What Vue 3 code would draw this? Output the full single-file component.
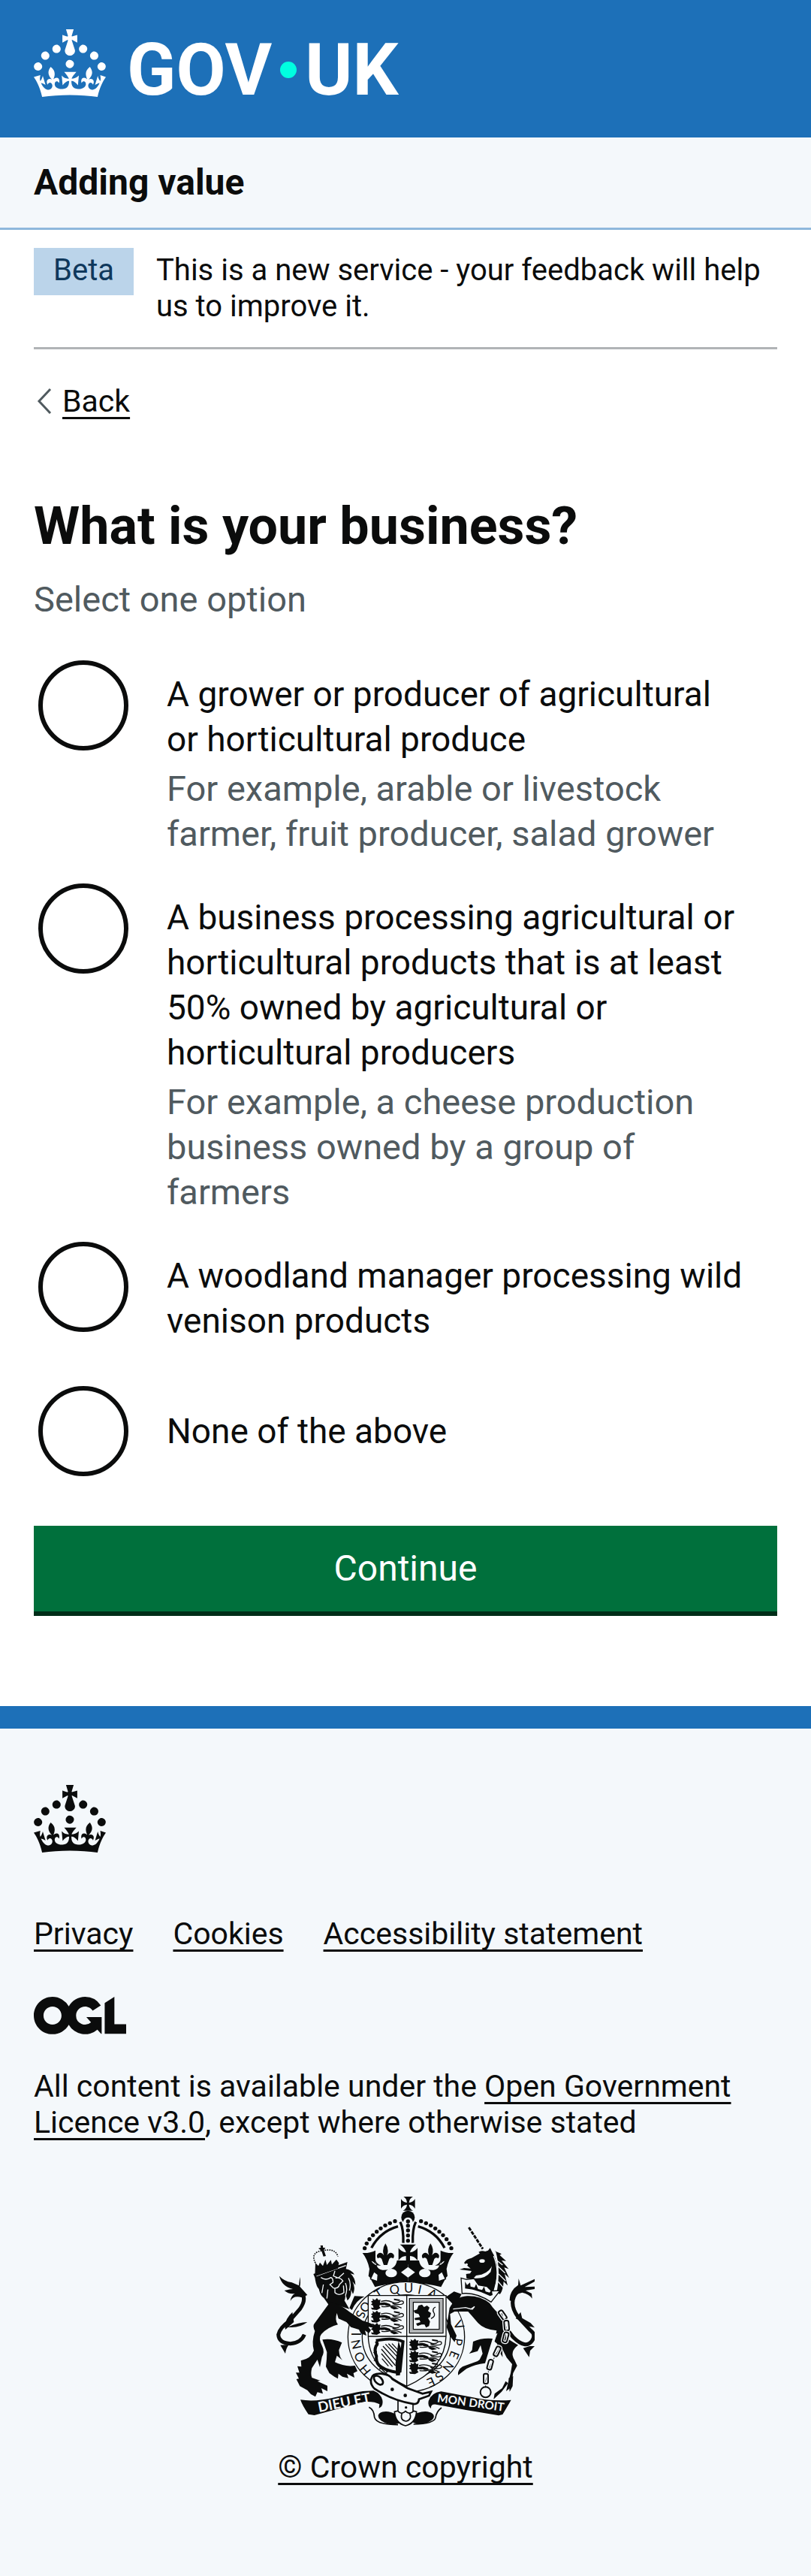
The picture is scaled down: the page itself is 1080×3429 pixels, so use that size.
<script setup>
import { ref } from 'vue'

const choice = ref('')

const options = [
  {
    value: 'grower',
    label: 'A grower or producer of agricultural or horticultural produce',
    hint: 'For example, arable or livestock farmer, fruit producer, salad grower'
  },
  {
    value: 'processor',
    label: 'A business processing agricultural or horticultural products that is at least 50% owned by agricultural or horticultural producers',
    hint: 'For example, a cheese production business owned by a group of farmers'
  },
  { value: 'woodland', label: 'A woodland manager processing wild venison products' },
  { value: 'none', label: 'None of the above' }
]

const footerLinks = ['Privacy', 'Cookies', 'Accessibility statement']

const crownPath =
  'M22.6 10.4c-1 .4-2-.1-2.4-1-.4-.9.1-2 1-2.4.9-.4 2 .1 2.4 1s-.1 2-1 2.4m-5.9 6.7c-.9.4-2-.1-2.4-1-.4-.9.1-2 1-2.4.9-.4 2 .1 2.4 1s-.1 2-1 2.4m10.8-3.7c-1 .4-2-.1-2.4-1-.4-.9.1-2 1-2.4.9-.4 2 .1 2.4 1s0 2-1 2.4m3.3 4.8c-1 .4-2-.1-2.4-1-.4-.9.1-2 1-2.4.9-.4 2 .1 2.4 1s-.1 2-1 2.4M17 4.7l2.3 1.2V2.5l-2.3.7-.2-.2.9-3h-3.4l.9 3-.2.2c-.1.1-2.3-.7-2.3-.7v3.4L15 4.7c.1.1.1.2.2.2l-1.3 4c-.1.2-.1.4-.1.6 0 1.1.8 2 1.9 2.2h.7c1-.2 1.9-1.1 1.9-2.1 0-.2 0-.4-.1-.6l-1.3-4c-.1-.2 0-.2.1-.3m-7.6 5.7c.9.4 2-.1 2.4-1 .4-.9-.1-2-1-2.4-.9-.4-2 .1-2.4 1s0 2 1 2.4m-5 3c.9.4 2-.1 2.4-1 .4-.9-.1-2-1-2.4-.9-.4-2 .1-2.4 1s.1 2 1 2.4m-3.2 4.8c.9.4 2-.1 2.4-1 .4-.9-.1-2-1-2.4-.9-.4-2 .1-2.4 1s0 2 1 2.4m14.8 11c4.4 0 8.6.3 12.3.8 1.1-4.5 2.4-7 3.7-8.8l-2.5-.9c.2 1.3.3 1.9 0 2.7-.4-.4-.8-1.1-1.1-2.3l-1.2 4c.7-.5 1.3-.8 2-.9-1.1 2.5-2.6 3.1-3.5 3-1.1-.2-1.7-1.2-1.5-2.1.3-1.2 1.5-1.5 2.1-.1 1.1-2.3-.8-3-2-2.3 1.9-1.9 2.1-3.5.6-5.6-2.1 1.6-2.1 3.2-1.2 5.5-1.2-1.4-3.2-.6-2.5 1.6.9-1.4 2.1-.5 1.9.8-.2 1.1-1.7 2.1-3.5 1.9-2.7-.2-2.9-2.1-2.9-3.6.7-.1 1.9.5 2.9 1.9l.4-4.3c-1.1 1.1-2.1 1.4-3.2 1.4.4-1.2 2.1-3 2.1-3h-5.4s1.7 1.9 2.1 3c-1.1 0-2.1-.2-3.2-1.4l.4 4.3c1-1.4 2.2-2 2.9-1.9-.1 1.5-.2 3.4-2.9 3.6-1.9.2-3.4-.8-3.5-1.9-.2-1.3 1-2.2 1.9-.8.7-2.3-1.2-3-2.5-1.6.9-2.2.9-3.9-1.2-5.5-1.5 2-1.3 3.7.6 5.6-1.2-.7-3.1 0-2 2.3.6-1.4 1.8-1.1 2.1.1.2.9-.3 1.9-1.5 2.1-.9.2-2.4-.5-3.5-3 .6 0 1.2.3 2 .9l-1.2-4c-.3 1.1-.7 1.9-1.1 2.3-.3-.8-.2-1.4 0-2.7l-2.9.9C1.3 23 2.6 25.5 3.7 30c3.7-.5 7.9-.8 12.3-.8'

// Royal coat of arms: pearls on the left arch; the right arch mirrors them about x = 610
const archPearls = [
  [558, 173], [538, 181], [519, 190], [501, 202], [485, 215],
  [470, 229], [456, 245], [445, 262], [437, 281]
]
const stemPearls = [174, 191, 210, 230, 251]

// Letters of the garter motto: character, x, y, angle
const motto = [
  ['H', 438, 768, 50], ['O', 416, 716, 65], ['N', 402, 665, 78], ['I', 402, 624, 90],
  ['S', 420, 545, 110], ['O', 438, 515, 125],
  ['T', 493, 463, -32], ['Q', 556, 446, -10], ['U', 612, 441, 0], ['I', 657, 447, 12], ['A', 708, 464, 28],
  ['V', 812, 588, 62], ['P', 808, 655, 98], ['E', 794, 707, 112],
  ['N', 770, 754, 128], ['S', 735, 792, 142], ['E', 702, 816, 156]
]

// Top-left corner of each small walking lion on the shield
const shieldLions = [
  [462, 482], [462, 532], [462, 581],
  [614, 644], [614, 691], [614, 738]
]

const chainLinks = [
  [988, 548, -35], [1004, 590, -5], [1000, 637, 15], [966, 693, 25], [938, 746, 15], [921, 802, 0]
]
</script>

<template>
  <div class="page">
    <header>
      <div class="masthead">
        <a class="brand" href="#" aria-label="GOV.UK">
          <svg class="crown" viewBox="0 0 32 30" aria-hidden="true"><path :d="crownPath" /></svg>
          <span class="wordmark">GOV<i class="dot"></i>UK</span>
        </a>
      </div>
      <div class="service"><a href="#">Adding value</a></div>
    </header>

    <div class="container">
      <div class="phase">
        <strong class="tag">Beta</strong>
        <span>This is a new service - your feedback will help us to improve it.</span>
      </div>

      <a class="back" href="#">
        <svg viewBox="0 0 20 34" aria-hidden="true"><path d="M18 1 3 17l15 16" /></svg>
        <span class="link">Back</span>
      </a>

      <main>
        <form @submit.prevent>
          <fieldset aria-describedby="business-hint">
            <legend><h1>What is your business?</h1></legend>
            <div id="business-hint" class="hint">Select one option</div>
            <div class="radios">
              <div v-for="o in options" :key="o.value" class="option">
                <input :id="o.value" v-model="choice" type="radio" name="business" :value="o.value" />
                <div class="option-text">
                  <label :for="o.value">{{ o.label }}</label>
                  <div v-if="o.hint" class="option-hint">{{ o.hint }}</div>
                </div>
              </div>
            </div>
          </fieldset>
          <button type="submit">Continue</button>
        </form>
      </main>
    </div>

    <footer>
      <svg class="crown" viewBox="0 0 32 30" aria-hidden="true"><path :d="crownPath" /></svg>
      <ul class="footer-links">
        <li v-for="l in footerLinks" :key="l"><a class="link" href="#">{{ l }}</a></li>
      </ul>
      <svg class="ogl" viewBox="0 0 483 196" role="img" aria-label="Open Government Licence">
        <path d="M421.5 142.8V.1l-50.7 32.3v161.1h112.4v-50.7zm-122.3-9.6A47.12 47.12 0 0 1 221 97.8c0-26 21.1-47.1 47.1-47.1 16.7 0 31.4 8.7 39.7 21.8l42.7-27.2A97.63 97.63 0 0 0 268.1 0c-36.5 0-68.3 20.1-85.1 49.7A98 98 0 0 0 97.8 0C43.9 0 0 43.9 0 97.8s43.9 97.8 97.8 97.8c36.5 0 68.3-20.1 85.1-49.7a97.76 97.76 0 0 0 149.6 25.4l19.4 22.2h3v-87.8h-80l24.3 27.5zM97.8 145c-26 0-47.1-21.1-47.1-47.1s21.1-47.1 47.1-47.1 47.1 21.1 47.1 47.1S123.8 145 97.8 145" />
      </svg>
      <p class="licence">
        All content is available under the <a class="link" href="#">Open Government Licence v3.0</a>, except where otherwise stated
      </p>

      <a class="copyright" href="#">
        <svg class="arms" viewBox="84 75 1032 918" aria-hidden="true">
          <defs>
            <g id="passant">
              <path d="M6 0l10 6 8-8 6 8 8-2-2 12 6 6-8 6-2 8-12 4-10-4-2-8-8-4 6-6-6-6 8-4zM36 18q20-6 34 2 10 2 8 8-12 4-24-2-14 2-18-2zM0 36l18 2 16-6 4 6-14 8-20-2zM92 0l24 4-2 6-22-4zM76 32q18-4 28 4l8 4-20 4-12-6z" />
              <path class="line" d="M40 12q24-8 44 2t34-4q12-2 12 6t-20 8q-18 0-24-6M42 32q22 2 34-2 22-6 46 8" />
            </g>
            <path id="fleur" d="M520 262q-16 24-6 48-10-16-23-8-10 8-2 20 10-8 16 2l8 24h14l8-24q6-10 16-2 8-12-2-20-13-8-23 8 10-24-6-48z" />
            <path id="cross-patee" d="M-16-28H20Q5-20 4-4 20-5 28-19V20Q20 5 4 4 5 20 20 28H-20Q-5 20-4 4-20 5-28 20V-19Q-20-5-4-4-5-20-18-28z" />
            <g id="half-crown">
              <circle v-for="p in archPearls" :key="p[0]" :cx="p[0]" :cy="p[1]" r="8" />
              <path class="arch" d="M570 194q-72 20-106 86" />
              <path d="M428 300q28 2 52-10v54q-10-12-16-12 10 20 38 18-20-8-22-24-1 14 4 22 6 18 24 20 52 2 58-38h44v90q-74 0-132 16l-20-38-6-6 4-28q-8-40-28-64z" />
              <use href="#fleur" />
              <ellipse class="bg" cx="543" cy="380" rx="23" ry="17" />
              <path class="bg edge" d="m474 374-14 30 28 10 2-28z" />
            </g>
          </defs>

          <!-- main crown -->
          <use href="#half-crown" />
          <use href="#half-crown" transform="matrix(-1 0 0 1 1220 0)" />
          <use href="#cross-patee" x="610" y="103" />
          <circle cx="610" cy="158" r="27" />
          <path class="bg" d="M589 182q4-24 21-24t21 24v80h-42z" />
          <path class="arch" d="M579 176q14 30 12 84M641 176q-14 30-12 84" />
          <circle v-for="y in stemPearls" :key="y" cx="610" :cy="y" r="8" />
          <path d="M578 266h64q-20 14-24 32 22-4 30-18v50q-12-18-30-18v34h-16v-34q-18 0-30 18v-50q8 14 30 18-4-18-24-32z" />
          <path class="bg" d="m610 356 28 21-28 21-28-21z" />

          <!-- lion's far arm and unicorn's far shoulder -->
          <path d="M376 520l20-48 40 2q-34 16-50 54zM764 474l30-20 30 10-20 40-34 8z" />

          <!-- garter -->
          <ellipse class="bg ring" cx="603" cy="635" rx="233" ry="220" />
          <ellipse class="ring" cx="603" cy="635" rx="176" ry="168" />
          <text v-for="(m, i) in motto" :key="i" class="motto" :transform="`translate(${m[1]} ${m[2]}) rotate(${m[3]})`" dy="17">{{ m[0] }}</text>

          <!-- shield -->
          <path class="bg ring" d="M451 470h311v162q-4 132-157 200-150-68-154-200z" />
          <path class="line" d="M605 470v362M451 633h311" />
          <use v-for="(l, i) in shieldLions" :key="i" href="#passant" :x="l[0]" :y="l[1]" />
          <path class="grey" d="M624 490h118v122H624z" />
          <path class="line" d="M616 482h134v138H616zM631 497h104v108H631z" />
          <path d="M652 510l14-4 8 10 12-6 10 8-6 14 12 8-4 16-8 4 8 14-4 18-12 6-6-12-12 0-16 6-6-10 18-6-4-8-18 0-2-8 22-4-6-12-14-4-6-10 14-4z" />
          <path class="line" d="M702 562q22-10 10-26-6-14 8-20" />
          <!-- harp -->
          <path class="harp" d="M482 652q10 10 0 20-8 20 2 40-4 30 20 44 24 16 60 20l14-4 12-118q-40-18-108-4" />
          <path class="strings" d="m510 672 62 68M520 664l56 60M532 662l46 48M546 662l34 36M504 684l56 66M504 702l44 52M506 722l26 30" />
          <path d="M486 690l-16 8 16 8zM486 722l-14 8 18 8zM500 752l-6 14 16-4zM524 766l-2 14 14-8zM560 740l12-88 14 40-8 96-16 2z" />

          <!-- lion -->
          <path d="M232 384l136-48-6 28q20 2 34 22l-16-4q20 18 20 46l-12-14q14 24 2 50l-8-18q4 28-14 44l-8-26q0 18-4 26l20 34-56-18-6 18-12-4-28-40q-14-8-20-36-10-10-14-34 0-10-8-26z" />
          <path class="carve" d="M244 392l118-42M262 398q20 14 40 0 10 4 8 20l-12 8 14 14q20 4 24-14l14-14q-10-16-30-12M318 372l-6 20 20 8 22-20M318 442v16q16 16 36 0l-2-28M272 426l-6 34M290 446l-4 36M372 400q12 20 4 50M360 420q10 24 0 50" />
          <path d="M300 494q44 14 78 42l50 34q24 6 44 16l-8 12-14-4 12 14-8 12-16-10 6 20-22-8-8-16-32-10-18-20-32-14-6-22q-10 28 4 46-40 10-66 38-14 16 4 50 10 20-2 42l-8 40-10-30-22 34q-6 24 0 38l34 12-12 2 40 18 0 22-24-12 6 22-22-6-8 18-18-10-14-16-30-16-14-28 10-2-12-24 14 0-8-26 16 2-2-24q40-8 52-40-10-36 4-78-10-20-2-30z" />
          <path d="M268 646q40-6 78 12l-12 30q2 30 14 40l-22-18-8 26q40 20 80 14l10 22-16 8 4 18-30-16 6 18-24-6-16-12-2 20-14-8-20-14-14-26q4-30 4-58z" />
          <path class="tail" d="M196 626q-14 34-56 36-46-2-48-36 6-28 46-56l40-46q32-44 0-74" />
          <path d="M96 392q18 20 50 26l28 12 4-34q4 24 0 38l30 34-22 10q-34-10-46 14 2-20 18-30-24 4-42-12 24-6 34-6-44-10-54-52zM148 536l6 40-34 30q-8-36 28-70zM130 596q44-20 78-20-34 26-78 20zM100 668l20 34q2-20 14-36z" />
          <!-- lion's crown -->
          <path class="pearls" d="M240 340q-16-32 8-44l18-6 26-2q30 0 38 26" />
          <path d="M240 340l12 12 6-14 12 14 10-26 6 22 16-20 4 18 18-20 10 14-4 22-92 32zM252 282l10-4-2-8 10 0 0 8 10 2-6 8 8 24-10 2-8-24z" />

          <!-- unicorn -->
          <path class="horn" d="M853 198l56 86" />
          <path d="M892 296q20-10 38 4l-6 12q-20 2-32-16z" />
          <path d="M834 340q8-16 30-20l36-20 30-10 8-10 16 32-4 30q-12 34-46 44l-22 4-14 14-24-2-2-18 16-2 6-10-18-2-30-4 18-6 26 2z" />
          <path d="M940 290q30 34 26 90-4 46-20 90l-38-14-30-22-20-24 8-10q50 8 74-24 12-40-2-80z" />
          <path d="M956 292l28 12-8 4 26 24-18-2 28 34-18-6 20 42-18-16 12 46-16-16q0 30-14 50l-14-4q18-90-4-168z" />
          <path class="carve" d="M952 312q26 60 4 140M960 326l28 22M968 352l30 28M972 384l28 28M970 414l22 26" />
          <ellipse class="bg" cx="906" cy="332" rx="11" ry="7" />
          <circle class="bg" cx="844" cy="346" r="5" />
          <path class="bg line" d="M822 400l22 6 30-4 18 26 34 6 18 18 34-2-36 46q-60-40-116-34z" />
          <path d="M838 414l8 14 12-10 2 16 16 4 6-14 8 20 16 4 8-14 6 20 16 4 8-12 4 22-10 4q-50-26-100-30z" />
          <path d="M776 520q24-46 70-48 50-2 90 28 20 30 46 50l14 42-4 40 38 24 20 12q-36 26-14 60l10 22-16 30-6 38-4 20-18 14 6-26 12-46 6-36-22-26-18-36 2 34-14-24-8-30-10-8 8-44q-50-4-74-30l-26-30-14-16-54 0-18 10 4 40 22 46-8 26-18-24-14-36z" />
          <path class="carve" d="M790 524l50-6 22 6 14-10-10 12M950 630l14-6-10 26" />
          <path d="M870 654q34-16 78-12l-14 46-16 52q-40 4-74 22l-34 26q-4-20 18-34l60-22 8-6 12-24-8-34-12 24-34 10 12-14z" />
          <path d="M1012 800l18-8-2 40-12 22zM1010 820l-26 34-32 30 4-22 30-22 14-28z" />
          <path class="tail" d="M1010 610l20 26q50 50 76 14 16-24-6-40l-50-54q-44-60 0-106" />
          <path d="M1016 490q0-40 34-62l2-26 8 28 56-26v10l-40 22 40-2v10l-36 6 24 12 2 20q-12-18-40-24-32 6-36 36zM1040 562l20-26 6 24 34 20 16 18-30-6-20-20zM1070 680l24 36 4-26 18-18-20 0z" />

          <!-- chain -->
          <path class="chain-line" d="M792 494q-4-30 26-28M984 540l18 56-2 44-36 60-28 56-16 56v26" />
          <g v-for="(c, i) in chainLinks" :key="i" :transform="`translate(${c[0]} ${c[1]}) rotate(${c[2]})`">
            <rect class="chain-gap" x="-9" y="-20" width="18" height="40" rx="7" />
            <rect class="chain" x="-9" y="-20" width="18" height="40" rx="7" />
          </g>
          <circle class="chain" cx="920" cy="856" r="21" />

          <!-- ribbon -->
          <path d="M180 886q60 10 140-10t110-24l42-2q30 12 36 38 4 24-14 32l2-16q-20-12-60-10l-200 54-24-4q-24-34-32-58z" />
          <path d="M1022 887q-80 6-160-12l-120-22q-40 6-50 38-4 20 10 30-2-18 20-16l120 22 130 22 16-4z" />
          <path class="thin" d="M454 916q20 10 22 40 8 30 94 30M744 918q-20 14-24 40-6 24-88 26" />
          <ellipse cx="536" cy="959" rx="46" ry="24" transform="rotate(14 536 959)" />
          <ellipse cx="668" cy="958" rx="46" ry="24" transform="rotate(-10 668 958)" />
          <text class="scroll wide" transform="translate(254 936) rotate(-11)">DIEU ET</text>
          <text class="scroll" transform="translate(725 895) rotate(8)">MON DROIT</text>

          <!-- buckle and strap -->
          <path class="bg thin" d="M570 880v50l-14 4q4 46 44 56 40-10 44-56l-14-4v-40z" />
          <path class="thin" d="M586 940q-10 28 16 32 26-6 14-34M570 932q14 16 30 0 16 16 32 0" />
          <path class="bg belt" d="M464 800q4-20 40-18 34 4 44 22l60 36 60 22 34-8-8 16-40 14q-2 24-28 18-80-14-150-60-20-20-12-42z" />
          <ellipse class="belt" cx="492" cy="808" rx="22" ry="13" transform="rotate(45 492 808)" />
          <circle cx="547" cy="845" r="7" /><circle cx="599" cy="869" r="7" /><circle cx="602" cy="917" r="5" />
        </svg>
        <span class="link">© Crown copyright</span>
      </a>
    </footer>
  </div>
</template>

<style>
body {
  margin: 0;
  background: #f4f8fb;
}
</style>

<style scoped>
.page {
  background: #fff;
  color: #0b0c0c;
  font: 41px/48px Roboto, "Liberation Sans", sans-serif;
}
a {
  color: inherit;
  text-decoration: none;
}
.link {
  text-decoration: underline 3px;
  text-underline-offset: 7px;
  text-decoration-skip-ink: none;
}

.masthead {
  padding: 39px 45px 36px;
  background: #1d70b8;
}
.brand {
  display: flex;
  align-items: flex-start;
  gap: 28px;
  color: #fff;
}
.crown {
  display: block;
  width: 96px;
  height: 90px;
  fill: currentColor;
}
.wordmark {
  display: flex;
  align-items: center;
  font-size: 96px;
  font-weight: 700;
  line-height: 108px;
}
.dot {
  width: 22px;
  height: 22px;
  margin: 0 11px;
  border-radius: 50%;
  background: #00ffe0;
}
.service {
  padding: 30px 45px;
  border-bottom: 3px solid #8eb8dc;
  background: #f4f8fb;
  font-size: 48px;
  font-weight: 700;
  line-height: 60px;
}

.container {
  padding: 0 45px;
}
.phase {
  display: flex;
  align-items: flex-start;
  gap: 30px;
  padding: 30px 0;
  border-bottom: 3px solid #b1b4b6;
  font-size: 40px;
}
.tag {
  margin-top: -6px;
  padding: 6px 26px 9px;
  background: #bbd4ea;
  color: #0f385c;
  font-weight: 400;
}
.back {
  display: flex;
  align-items: center;
  gap: 14px;
  width: fit-content;
  margin-top: 45px;
}
.back svg {
  width: 20px;
  height: 34px;
  margin-left: 4px;
  fill: none;
  stroke: #505a5f;
  stroke-width: 3px;
}
main {
  padding: 105px 0 120px;
  font-size: 46px;
  line-height: 60px;
}
fieldset {
  min-width: 0;
  margin: 0;
  padding: 0;
  border: 0;
}
legend {
  padding: 0;
}
h1 {
  margin: 0 0 30px;
  font-size: 70px;
  line-height: 75px;
}
.hint,
.option-hint {
  color: #505a5f;
  font-size: 47px;
}
.radios {
  display: flex;
  flex-direction: column;
  gap: 30px;
  margin: 45px 0 60px;
}
.option {
  display: flex;
  min-height: 132px;
}
.option input {
  flex: none;
  width: 120px;
  height: 120px;
  margin: 6px;
  appearance: none;
  border: 6px solid #0b0c0c;
  border-radius: 50%;
  background: #fff;
}
.option input:checked {
  background: radial-gradient(#0b0c0c 32px, #fff 33px);
}
.option-text {
  display: flex;
  flex-direction: column;
  justify-content: center;
  padding: 0 45px;
}
.option label {
  padding: 21px 0;
}
.option-hint {
  margin-top: -15px;
}
button {
  display: block;
  width: 100%;
  padding: 27px 30px;
  border: 0;
  box-shadow: 0 6px 0 #002d18;
  background: #00703c;
  color: #fff;
  font-family: inherit;
  font-size: 48px;
  line-height: 60px;
  margin-bottom: 6px;
}

footer {
  padding: 75px 45px 120px;
  border-top: 30px solid #1d70b8;
  background: #f4f8fb;
}
.footer-links {
  display: flex;
  flex-wrap: wrap;
  gap: 18px 53px;
  margin: 84px 0 60px;
  padding: 0;
  list-style: none;
}
.ogl {
  display: block;
  width: 123px;
  height: 50px;
  fill: currentColor;
}
.licence {
  margin: 45px 0 75px;
}
.copyright {
  display: flex;
  flex-direction: column;
  align-items: center;
  gap: 30px;
}

.arms {
  width: 344px;
  height: 306px;
  fill: #0b0c0c;
}
.bg {
  fill: #f4f8fb;
}
.arch,
.line,
.ring,
.thin,
.pearls,
.belt,
.harp,
.strings,
.tail,
.horn,
.chain,
.chain-line {
  stroke: #0b0c0c;
}
.arch,
.line:not(.bg),
.ring:not(.bg),
.thin:not(.bg),
.belt:not(.bg),
.pearls,
.harp,
.strings,
.tail,
.horn,
.chain,
.chain-gap,
.chain-line,
.grey,
.carve {
  fill: none;
}
.arch {
  stroke-width: 10px;
}
.line,
.ring,
.strings {
  stroke-width: 4px;
}
.thin {
  stroke-width: 5px;
}
.pearls {
  stroke-width: 5px;
  stroke-dasharray: 5px 4px;
}
.edge {
  stroke: #0b0c0c;
  stroke-width: 4px;
}
.belt {
  stroke-width: 8px;
}
.harp {
  stroke-width: 12px;
}
.tail {
  stroke-width: 15px;
}
.horn {
  stroke-width: 9px;
  stroke-dasharray: 15px 4px;
}
.chain {
  stroke-width: 6px;
}
.chain-gap {
  stroke: #f4f8fb;
  stroke-width: 14px;
}
.chain-line {
  stroke-width: 3px;
}
.grey {
  stroke: #b1b4b6;
  stroke-width: 10px;
}
.carve {
  stroke: #f4f8fb;
  stroke-width: 4px;
}
.motto {
  font: 50px Lato, sans-serif;
  text-anchor: middle;
}
.scroll {
  fill: #f4f8fb;
  font: 700 46px Lato, sans-serif;
}
.scroll.wide {
  font-size: 56px;
}
</style>
